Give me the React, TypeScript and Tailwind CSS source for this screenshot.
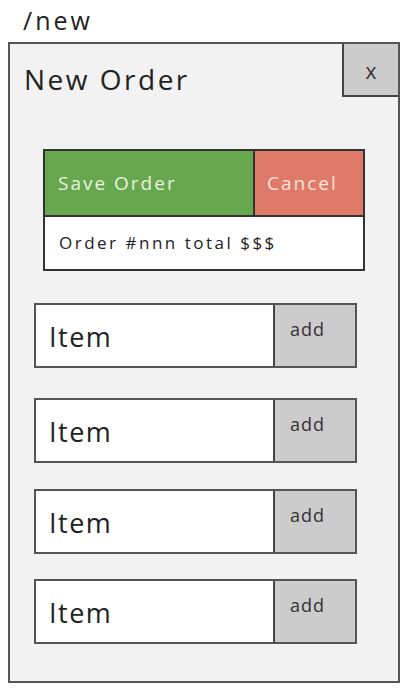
const gaps = ['mt-[32px]', 'mt-[30px]', 'mt-[26px]', 'mt-[25px]'];

function ItemRow({ label, gap }: { label: string; gap: string }) {
  return (
    <div className={'ml-[24px] flex h-[65px] w-[323px] border-2 border-[#555] bg-white ' + gap}>
      <div className="flex flex-1 items-center pl-[13px] pt-[4px] text-[27px] tracking-[1.5px] text-[#222]">{label}</div>
      <div className="w-[82px] border-l-2 border-[#444] bg-[#cccccc] pl-[15px] pt-[11px] text-[18px] tracking-[1px] text-[#333]">
        add
      </div>
    </div>
  );
}

export default function App() {
  return (
    <div className="h-[692px] w-[408px] bg-white font-['Open_Sans',sans-serif]">
      <div className="pl-[23px] pt-[1px] text-[25px] leading-[38px] tracking-[3px] text-[#222]">/new</div>
      <div className="ml-[8px] mt-[3px] h-[641px] w-[392px] border-2 border-[#555] bg-[#f2f2f2]">
        <div className="flex h-[53px] items-start justify-between">
          <div className="pl-[14px] pt-[17px] text-[28px] leading-[36px] tracking-[2.5px] text-[#222]">New Order</div>
          <div className="flex h-[53px] w-[56px] items-center justify-center border-b-2 border-l-2 border-[#444] bg-[#cccccc] pt-[4px] text-[21px] text-[#333]">
            x
          </div>
        </div>
        <div className="ml-[33px] mt-[52px] w-[322px] border-2 border-[#333] bg-white">
          <div className="flex h-[64px]">
            <div className="flex flex-1 items-center bg-[#67a74d] pl-[13px] text-[19px] tracking-[2px] text-[#e8f3e0]">
              Save Order
            </div>
            <div className="flex w-[110px] items-center border-l-2 border-[#333] bg-[#e07a68] pl-[12px] text-[19px] tracking-[2px] text-[#fae3de]">
              Cancel
            </div>
          </div>
          <div className="flex h-[54px] items-center border-t-2 border-[#333] pl-[14px] text-[17px] tracking-[2.5px] text-[#222]">
            Order #nnn total $$$
          </div>
        </div>
        {gaps.map((gap, i) => (
          <ItemRow key={i} label="Item" gap={gap} />
        ))}
      </div>
    </div>
  );
}
